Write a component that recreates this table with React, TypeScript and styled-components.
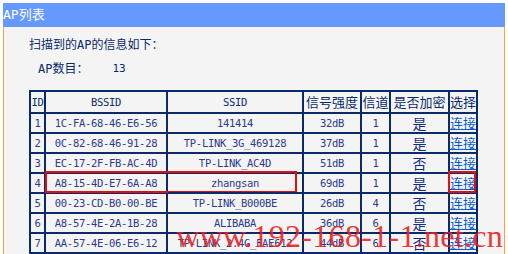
import styled, { createGlobalStyle } from "styled-components";

const GlobalStyle = createGlobalStyle`
    html, body {
        margin: 0;
        padding: 0;
        background: #FFFFFF;
        overflow: hidden;
    }
    body {
        font-family: "Noto Sans CJK SC", sans-serif;
    }
`;

const Panel = styled.div`
    position: relative;
    width: 502px;
    margin: 3px 0 0 3px;
`;

const TitleBar = styled.div`
    height: 24px;
    line-height: 24px;
    background-color: #6699FF;
    color: #FFFFFF;
    font-size: 13px;
    font-family: "DejaVu Sans Mono", "Noto Sans CJK SC", monospace;
`;

const Body = styled.div`
    background-color: #F4F4F4;
    border-left: 1px solid #F7A43A;
    border-right: 1px solid #F7A43A;
    padding: 10px 0 40px 25px;
    color: #0A2A6A;
`;

const Line = styled.div<{ $indent?: number; $gap?: number }>`
    display: flex;
    height: 16px;
    line-height: 16px;
    font-size: 12px;
    margin-left: ${(p) => p.$indent ?? 0}px;
    margin-top: ${(p) => p.$gap ?? 0}px;
    font-family: "DejaVu Sans Mono", "Noto Sans CJK SC", monospace;
`;

const Count = styled.span`
    margin-left: 24px;
    font-size: 11px;
`;

const Table = styled.table`
    margin-top: 13px;
    width: 449px;
    table-layout: fixed;
    border-collapse: separate;
    border-spacing: 0;
    border-left: 2px solid #0A2A6A;
    border-top: 2px solid #0A2A6A;
`;

const Th = styled.th<{ $w: number; $cjk?: boolean }>`
    width: ${(p) => p.$w}px;
    height: 20px;
    line-height: 20px;
    padding: 0;
    border-right: 2px solid #0A2A6A;
    border-bottom: 2px solid #0A2A6A;
    color: #0A2A6A;
    font-weight: normal;
    white-space: nowrap;
    overflow: visible;
    font-size: ${(p) => (p.$cjk ? "13px" : "10.5px")};
    letter-spacing: ${(p) => (p.$cjk ? "0" : "-0.3px")};
    font-family: ${(p) => (p.$cjk ? `"Noto Sans CJK SC", sans-serif` : `"DejaVu Sans Mono", monospace`)};
`;

const Td = styled.td<{ $cjk?: boolean }>`
    position: relative;
    height: 18px;
    line-height: 18px;
    padding: 0;
    text-align: center;
    vertical-align: middle;
    border-right: 2px solid #0A2A6A;
    border-bottom: 2px solid #0A2A6A;
    color: ${(p) => (p.$cjk ? "#142C80" : "#2E3A8C")};
    white-space: nowrap;
    font-size: ${(p) => (p.$cjk ? "14px" : "10.5px")};
    letter-spacing: ${(p) => (p.$cjk ? "0" : "-0.3px")};
    font-family: ${(p) => (p.$cjk ? `"Noto Sans CJK SC", sans-serif` : `"DejaVu Sans Mono", monospace`)};
`;

const Link = styled.a`
    display: inline-block;
    height: 18px;
    line-height: 18px;
    vertical-align: top;
    color: #0A5AD2;
    text-decoration: underline;
    font-size: 13px;
    letter-spacing: 0;
    font-family: "Noto Sans CJK SC", sans-serif;
    cursor: pointer;
`;

const Marker = styled.span<{ $l: number; $t: number; $w: number; $h: number }>`
    position: absolute;
    left: ${(p) => p.$l}px;
    top: ${(p) => p.$t}px;
    width: ${(p) => p.$w}px;
    height: ${(p) => p.$h}px;
    box-sizing: border-box;
    border: 2px solid #E01010;
    pointer-events: none;
`;

const Watermark = styled.div`
    position: absolute;
    left: 173px;
    top: 217px;
    font-family: "Liberation Serif", serif;
    font-size: 32px;
    line-height: 32px;
    letter-spacing: 0.3px;
    color: rgba(236, 30, 30, 0.9);
    white-space: nowrap;
    pointer-events: none;
`;

type Ap = { id: number; bssid: string; ssid: string; signal: string; channel: number; secure: boolean; marked?: boolean };

const aps: Ap[] = [
    { id: 1, bssid: "1C-FA-68-46-E6-56", ssid: "141414", signal: "32dB", channel: 1, secure: true },
    { id: 2, bssid: "0C-82-68-46-91-28", ssid: "TP-LINK_3G_469128", signal: "37dB", channel: 1, secure: true },
    { id: 3, bssid: "EC-17-2F-FB-AC-4D", ssid: "TP-LINK_AC4D", signal: "51dB", channel: 1, secure: false },
    { id: 4, bssid: "A8-15-4D-E7-6A-A8", ssid: "zhangsan", signal: "69dB", channel: 1, secure: true, marked: true },
    { id: 5, bssid: "00-23-CD-B0-00-BE", ssid: "TP-LINK_B000BE", signal: "26dB", channel: 4, secure: false },
    { id: 6, bssid: "A8-57-4E-2A-1B-28", ssid: "ALIBABA", signal: "36dB", channel: 6, secure: true },
    { id: 7, bssid: "AA-57-4E-06-E6-12", ssid: "TP-LINK_2.4G_FAE612", signal: "44dB", channel: 6, secure: false },
];

export default function App() {
    return (
        <>
            <GlobalStyle />
            <Panel>
                <TitleBar>{"AP列表"}</TitleBar>
                <Body>
                    <Line>{"扫描到的AP的信息如下："}</Line>
                    <Line $indent={9} $gap={8}>
                        {"AP数目："}
                        <Count>{"13"}</Count>
                    </Line>
                    <Table>
                        <thead>
                            <tr>
                                <Th $w={13}>{"ID"}</Th>
                                <Th $w={120}>{"BSSID"}</Th>
                                <Th $w={134}>{"SSID"}</Th>
                                <Th $w={56} $cjk>{"信号强度"}</Th>
                                <Th $w={27} $cjk>{"信道"}</Th>
                                <Th $w={57} $cjk>{"是否加密"}</Th>
                                <Th $w={26} $cjk>{"选择"}</Th>
                            </tr>
                        </thead>
                        <tbody>
                            {aps.map((ap) => (
                                <tr key={ap.id}>
                                    <Td>{ap.id}</Td>
                                    <Td>
                                        {ap.bssid}
                                        {ap.marked && <Marker $l={-1} $t={-3} $w={252} $h={22} />}
                                    </Td>
                                    <Td>{ap.ssid}</Td>
                                    <Td>{ap.signal}</Td>
                                    <Td>{ap.channel}</Td>
                                    <Td $cjk>{ap.secure ? "是" : "否"}</Td>
                                    <Td>
                                        <Link>{"连接"}</Link>
                                        {ap.marked && <Marker $l={-2} $t={-3} $w={28} $h={22} />}
                                    </Td>
                                </tr>
                            ))}
                        </tbody>
                    </Table>
                </Body>
                <Watermark>{"www.192-168-1-1.net.cn"}</Watermark>
            </Panel>
        </>
    );
}
